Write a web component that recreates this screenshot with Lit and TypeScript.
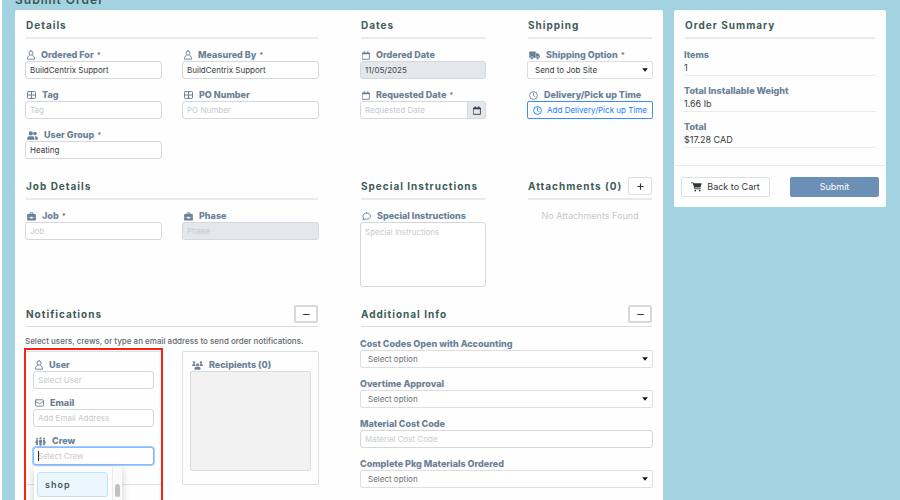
import { LitElement, html, css, svg, nothing } from "lit";
import { customElement } from "lit/decorators.js";

type Icon = { w: number; h: number; art: unknown };

const line = (d: string, width = 1) =>
  svg`<path d=${d} fill="none" stroke="currentColor" stroke-width=${width} stroke-linejoin="round" stroke-linecap="round"/>`;
const solid = (d: string) => svg`<path d=${d} fill="currentColor"/>`;

const icons: Record<string, Icon> = {
  person: {
    w: 8, h: 10,
    art: svg`${line("M4 .8a2 2.200 0 1 1 0 4.400a2 2.200 0 1 1 0-4.400z", 0.9)}${line("M2.400 5.700L1.200 6.300Q.5 7 .5 9.200h7Q7.500 7 6.800 6.300L5.600 5.700", 0.9)}`,
  },
  grid: { w: 9, h: 8, art: line("M1.300.600h6.400q.8 0 .8.8v5.200q0 .8-.8.8H1.300q-.8 0-.8-.8V1.400q0-.8.8-.8zM.5 4h8M4.500.6v6.800", 1) },
  group: {
    w: 11, h: 9,
    art: svg`<circle cx="3.800" cy="2.400" r="2.100" fill="currentColor"/><circle cx="7.900" cy="2.500" r="1.800" fill="currentColor"/>${solid("M.2 8.800V7.200Q.2 5.200 2.200 5.200h3.300q2 0 2 2v1.600zM8.300 8.800V7q0-1-.6-1.800h1.100q2 0 2 2v1.600z")}`,
  },
  calendar: { w: 8, h: 9, art: svg`${line("M.6 2h6.800v6.300H.6zM2.200.5v1.500M5.800.5v1.500", 0.9)}${line("M.6 2.500h6.800", 1.3)}` },
  truck: {
    w: 11, h: 9,
    art: svg`${solid("M.2.6h6.500v6.400H.2zM7 2.200h2l1.800 2V7H7z")}<circle cx="2.800" cy="7.100" r="1.500" fill="currentColor" stroke="#fff" stroke-width=".5"/><circle cx="8.500" cy="7.100" r="1.500" fill="currentColor" stroke="#fff" stroke-width=".5"/>`,
  },
  clock: { w: 9, h: 9, art: svg`<circle cx="4.500" cy="4.500" r="3.900" fill="none" stroke="currentColor" stroke-width=".9"/>${line("M4.500 2v2.700l1.500.9", 0.9)}` },
  case: {
    w: 9, h: 9,
    art: svg`${line("M3 2.200V.9h3v1.300", 1)}${solid("M1 2h7q.9 0 .9.900v2.500H5.700v-.6H3.300v.6H.1V2.900Q.1 2 1 2zM.1 5.800h3.200v.7h2.400v-.7h3.200v1.900q0 .9-.9.9H1q-.9 0-.9-.9z")}`,
  },
  chat: { w: 9, h: 9, art: line("M4.700 1c2.200 0 3.800 1.300 3.800 3.100S6.900 7.200 4.700 7.200q-.9 0-1.700-.3-1 .9-2.300.9.8-.8.8-1.700Q.900 5.200.900 4.100C.9 2.300 2.500 1 4.700 1z", 0.9) },
  mail: { w: 9, h: 8, art: line("M1.300.8h6.400q.8 0 .8.8v4.800q0 .8-.8.8H1.300q-.8 0-.8-.8V1.600q0-.8.8-.8zM.6 2.400l3.900 2.400 3.900-2.400", 0.9) },
  crew: {
    w: 11, h: 9,
    art: svg`<circle cx="2" cy="1.700" r="1" fill="currentColor"/><circle cx="5.500" cy="1.300" r="1.100" fill="currentColor"/><circle cx="9" cy="1.700" r="1" fill="currentColor"/>${solid("M4.500 2.800h2l.9 2-.8 1V8.800H4.400V5.800l-.8-1zM1.300 3.100h1.500l.3.600-.5 1.200.8 1.500-.5.3v1.500H1.200V6.400L.1 5.400zM9.700 3.100H8.200l-.3.600.5 1.200-.8 1.500.5.300v1.500h1.700V6.400l1.100-1z")}`,
  },
  recipients: {
    w: 11, h: 9,
    art: svg`<circle cx="5.500" cy="3.700" r="1.500" fill="currentColor"/><circle cx="2" cy="1.500" r="1.200" fill="currentColor"/><circle cx="9" cy="1.500" r="1.200" fill="currentColor"/>${solid("M2.500 8.800V7.400q0-1.700 1.700-1.700h2.600q1.700 0 1.700 1.700v1.400zM.1 4.900Q.1 3.100 1.400 3.100h1.800q-.2 1.200.5 1.800zM10.900 4.900q0-1.800-1.300-1.800H7.800q.2 1.200-.5 1.800z")}`,
  },
  cart: {
    w: 11, h: 10,
    art: svg`${line("M.6.8h1.700l1.500 6h5.600", 0.9)}${solid("M2.300 1.300h8.400l-1.200 4.200H3.400z")}<circle cx="4.300" cy="8.600" r=".9" fill="currentColor"/><circle cx="8.700" cy="8.600" r=".9" fill="currentColor"/>`,
  },
  caret: { w: 6, h: 4, art: solid("M.2.3h5.600L3 3.800z") },
  plus: { w: 7, h: 7, art: line("M3.500.8v5.400M.8 3.500h5.400", 1.2) },
  minus: { w: 7, h: 7, art: line("M.7 3.500h5.600", 1.2) },
};

const icon = (name: string) => {
  const i = icons[name];
  return html`<svg width=${i.w} height=${i.h} viewBox="0 0 ${i.w} ${i.h}" aria-hidden="true">${i.art}</svg>`;
};

@customElement("app-root")
export class AppRoot extends LitElement {
  static styles = css`
    :host {
      display: block;
      box-sizing: border-box;
      height: 100vh;
      overflow: hidden;
      padding: 0 14px 0 13px;
      border-left: 2px solid #fdfefe;
      background: #a3d2e1;
      color: #33383d;
      font: 8px/12px Inter, "Liberation Sans", sans-serif;
    }
    *, *::before, *::after { box-sizing: border-box; }
    svg { display: block; flex: none; }
    input, select, textarea, button { font: inherit; color: inherit; margin: 0; }
    h1, h2, p, dl, dd { margin: 0; }
    .title {
      display: flex;
      align-items: flex-end;
      height: 10px;
      font-size: 12px;
      line-height: 20px;
      font-weight: 600;
      letter-spacing: 1px;
      color: #3b5654;
    }
    .page { display: grid; grid-template-columns: 648fr 212fr; gap: 11px; align-items: start; }
    .panel { background: #fefefe; border-radius: 2px; }
    .form {
      display: grid;
      grid-template-columns: minmax(0, 294fr) minmax(0, 126fr) minmax(0, 126fr);
      gap: 13px 41px;
      padding: 1px 10px 40px;
    }
    .wide { grid-column: span 2; }
    .head {
      display: flex;
      align-items: center;
      justify-content: space-between;
      margin: 0 1px 10px;
      padding-top: 2px;
      border-bottom: 2px solid #e9ebeb;
    }
    .thin { border-bottom: 1px solid #d9dcdf; margin-bottom: 11px; }
    .head h2 {
      font-size: 10px;
      line-height: 24px;
      font-weight: 700;
      letter-spacing: 1px;
      white-space: nowrap;
      color: #3f5b59;
    }
    .square {
      display: grid;
      place-items: center;
      flex: none;
      width: 24px;
      height: 18px;
      padding: 0;
      background: #fff;
      border: 1px solid #dcdfe2;
      border-radius: 2px;
    }
    .pressed { border: 2px solid #d6d8da; }
    .fields { display: grid; grid-template-columns: 1fr 1fr; gap: 10px 20px; }
    .stack { display: grid; gap: 10px; align-content: start; }
    .tight { gap: 8px; }
    .field { display: grid; position: relative; min-width: 0; }
    .label {
      display: flex;
      align-items: center;
      gap: 6px;
      height: 12px;
      padding-left: 2px;
      font-size: 9px;
      font-weight: 800;
      white-space: nowrap;
      color: #6b8197;
    }
    .star { margin-left: 3px; font-size: 7px; }
    .plain { padding-left: 0; }
    .control {
      width: 100%;
      min-width: 0;
      height: 18px;
      padding: 0 4px;
      background: #fff;
      border: 1px solid #d3d7df;
      border-radius: 3px;
      outline: none;
      appearance: none;
    }
    .control::placeholder { color: #c6cad0; opacity: 1; }
    .control:disabled { background: #e4e7eb; color: #43494f; opacity: 1; }
    .area { height: 65px; padding: 3px 4px; resize: none; display: block; }
    .picker { position: relative; display: grid; }
    .picker .control { padding: 0 7px; border-color: #dcdee1; border-radius: 2px; }
    .picker svg { position: absolute; right: 5px; top: 7px; color: #111; pointer-events: none; }
    .picker .muted { color: #6b7075; }
    .date { display: flex; }
    .date .control { border-radius: 3px 0 0 3px; }
    .date button {
      display: grid;
      place-items: center;
      flex: none;
      width: 18px;
      padding: 0;
      background: #e4e7eb;
      border: 1px solid #d3d7df;
      border-left: 0;
      border-radius: 0 3px 3px 0;
    }
    .time {
      display: flex;
      align-items: center;
      justify-content: center;
      gap: 5px;
      height: 18px;
      padding: 0;
      background: #fff;
      border: 1px solid #3b8cff;
      border-radius: 2px;
      color: #1a7bff;
      white-space: nowrap;
    }
    .empty { text-align: center; color: #c3c8cd; font-size: 9px; }
    .hint { margin-top: -2px; line-height: 10px; font-weight: 500; color: #63686d; white-space: nowrap; }
    .cards { display: grid; grid-template-columns: 1fr 1fr; gap: 20px; margin-top: 5px; }
    .card {
      position: relative;
      height: 134px;
      padding: 7px;
      border: 1px solid #dcdee1;
      border-radius: 2px;
    }
    .list { height: 100px; background: #f2f2f2; border: 1px solid #d9dbdd; border-radius: 2px; }
    .outline {
      position: absolute;
      inset: -4px -2px -40px;
      border: 2px solid #f7220f;
      pointer-events: none;
    }
    .active { border-color: #85bbff; box-shadow: 0 0 0 1px #a9cffc; }
    .cursor { position: absolute; left: 5px; top: 16px; width: 1px; height: 10px; background: #333; }
    .menu {
      position: absolute;
      top: 32px;
      left: 1px;
      display: flex;
      width: 88px;
      height: 60px;
      background: #fff;
      box-shadow: 0 2px 8px #0003;
    }
    .options { flex: 1; padding: 5px 4px 0 3px; }
    .option {
      height: 25px;
      padding-left: 7px;
      background: #ecf6fe;
      border: 1px solid #bfe3ee;
      border-radius: 3px;
      font-size: 9px;
      line-height: 23px;
      font-weight: 600;
      letter-spacing: 1px;
      color: #3b5654;
    }
    .track { width: 10px; padding: 17px 2px 0; background: #fafafa; border-left: 1px solid #ececec; }
    .thumb { height: 13px; border-radius: 3px; background: #c1c1c1; }
    .summary { padding: 1px 10px 17px; }
    .totals { display: grid; gap: 9px; }
    .total { border-bottom: 1px solid #e9ebed; }
    .total dd { font-size: 9px; line-height: 14px; }
    .actions {
      display: grid;
      grid-template-columns: 1fr 1fr;
      gap: 20px;
      padding: 11px 7px 10px;
      border-top: 1px solid #e9ebed;
    }
    .action {
      display: flex;
      align-items: center;
      justify-content: center;
      gap: 5px;
      height: 20px;
      padding: 0;
      font-size: 9px;
      white-space: nowrap;
      background: #fff;
      border: 1px solid #dcdee1;
      border-radius: 2px;
    }
    .primary { background: #6b8fb5; border-color: #6b8fb5; color: #fff; }
  `;

  private label(id: string, text: string, glyph?: string, required = false) {
    return html`<label class="label ${glyph ? "" : "plain"}" for=${id}>
      ${glyph ? icon(glyph) : nothing}<span>${text}${required ? html`<span class="star">*</span>` : nothing}</span>
    </label>`;
  }

  private text(
    id: string,
    text: string,
    glyph?: string,
    o: { value?: string; hint?: string; off?: boolean; required?: boolean } = {},
  ) {
    return html`<div class="field">
      ${this.label(id, text, glyph, o.required)}
      <input class="control" id=${id} type="text" .value=${o.value ?? ""} placeholder=${o.hint ?? ""} ?disabled=${!!o.off} />
    </div>`;
  }

  private choice(id: string, text: string, option: string, glyph?: string, required = false) {
    return html`<div class="field">
      ${this.label(id, text, glyph, required)}
      <div class="picker">
        <select class="control ${glyph ? "" : "muted"}" id=${id}><option>${option}</option></select>
        ${icon("caret")}
      </div>
    </div>`;
  }

  private head(text: string, button?: "plus" | "minus") {
    return html`<div class="head ${button === "minus" ? "thin" : ""}">
      <h2>${text}</h2>
      ${button
        ? html`<button class="square ${button === "minus" ? "pressed" : ""}" type="button" aria-label=${button === "plus" ? "Add" : "Collapse"}>${icon(button)}</button>`
        : nothing}
    </div>`;
  }

  private total(name: string, value: string) {
    return html`<div class="total"><dt class="label plain">${name}</dt><dd>${value}</dd></div>`;
  }

  render() {
    return html`
      <h1 class="title">Submit Order</h1>
      <div class="page">
        <form class="panel form">
          <section>
            ${this.head("Details")}
            <div class="fields">
              ${this.text("for", "Ordered For", "person", { value: "BuildCentrix Support", required: true })}
              ${this.text("by", "Measured By", "person", { value: "BuildCentrix Support", required: true })}
              ${this.text("tag", "Tag", "grid", { hint: "Tag" })}
              ${this.text("po", "PO Number", "grid", { hint: "PO Number" })}
              ${this.text("group", "User Group", "group", { value: "Heating", required: true })}
            </div>
          </section>
          <section>
            ${this.head("Dates")}
            <div class="stack">
              ${this.text("ordered", "Ordered Date", "calendar", { value: "11/05/2025", off: true })}
              <div class="field">
                ${this.label("requested", "Requested Date", "calendar", true)}
                <div class="date">
                  <input class="control" id="requested" type="text" placeholder="Requested Date" />
                  <button type="button" aria-label="Open calendar">${icon("calendar")}</button>
                </div>
              </div>
            </div>
          </section>
          <section>
            ${this.head("Shipping")}
            <div class="stack">
              ${this.choice("shipping", "Shipping Option", "Send to Job Site", "truck", true)}
              <div class="field">
                ${this.label("time", "Delivery/Pick up Time", "clock")}
                <button class="time" id="time" type="button">${icon("clock")}<span>Add Delivery/Pick up Time</span></button>
              </div>
            </div>
          </section>

          <section>
            ${this.head("Job Details")}
            <div class="fields">
              ${this.text("job", "Job", "case", { hint: "Job", required: true })}
              ${this.text("phase", "Phase", "case", { hint: "Phase", off: true })}
            </div>
          </section>
          <section>
            ${this.head("Special Instructions")}
            <div class="field">
              ${this.label("notes", "Special Instructions", "chat")}
              <textarea class="control area" id="notes" placeholder="Special Instructions"></textarea>
            </div>
          </section>
          <section>
            ${this.head("Attachments (0)", "plus")}
            <p class="empty">No Attachments Found</p>
          </section>

          <section>
            ${this.head("Notifications", "minus")}
            <p class="hint">Select users, crews, or type an email address to send order notifications.</p>
            <div class="cards">
              <div class="card">
                <div class="stack tight">
                  ${this.text("user", "User", "person", { hint: "Select User" })}
                  ${this.text("email", "Email", "mail", { hint: "Add Email Address" })}
                  <div class="field">
                    ${this.label("crew", "Crew", "crew")}
                    <input class="control active" id="crew" type="text" role="combobox" aria-expanded="true" aria-controls="crews" placeholder="Select Crew" />
                    <span class="cursor"></span>
                    <div class="menu">
                      <div class="options" id="crews" role="listbox">
                        <div class="option" role="option" aria-selected="true">shop</div>
                      </div>
                      <div class="track"><div class="thumb"></div></div>
                    </div>
                  </div>
                </div>
                <div class="outline"></div>
              </div>
              <div class="card">
                <div class="label">${icon("recipients")}<span>Recipients (0)</span></div>
                <div class="list"></div>
              </div>
            </div>
          </section>
          <section class="wide">
            ${this.head("Additional Info", "minus")}
            <div class="stack">
              ${this.choice("codes", "Cost Codes Open with Accounting", "Select option")}
              ${this.choice("overtime", "Overtime Approval", "Select option")}
              ${this.text("material", "Material Cost Code", undefined, { hint: "Material Cost Code" })}
              ${this.choice("complete", "Complete Pkg Materials Ordered", "Select option")}
            </div>
          </section>
        </form>

        <aside class="panel">
          <div class="summary">
            ${this.head("Order Summary")}
            <dl class="totals">
              ${this.total("Items", "1")}
              ${this.total("Total Installable Weight", "1.66 lb")}
              ${this.total("Total", "$17.28 CAD")}
            </dl>
          </div>
          <div class="actions">
            <button class="action" type="button">${icon("cart")}<span>Back to Cart</span></button>
            <button class="action primary" type="button">Submit</button>
          </div>
        </aside>
      </div>
    `;
  }
}
